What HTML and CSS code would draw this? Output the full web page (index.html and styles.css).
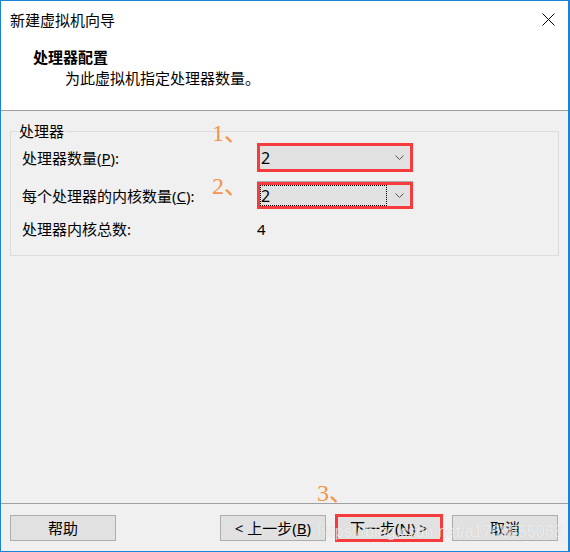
FILE: index.html
```html
<!DOCTYPE html>
<html lang="zh-CN">
<head>
<meta charset="utf-8">
<title>新建虚拟机向导</title>
<link rel="stylesheet" href="styles.css">
</head>
<body>
<div class="window">
  <div class="header">
    <div class="titlebar">
      <span class="title">新建虚拟机向导</span>
      <svg class="close" width="13" height="13" viewBox="0 0 13 13"><path d="M0.5 0.5 L12.5 12.5 M12.5 0.5 L0.5 12.5" stroke="#000" stroke-width="1" fill="none"/></svg>
    </div>
    <div class="heading">处理器配置</div>
    <div class="subtitle">为此虚拟机指定处理器数量。</div>
  </div>
  <div class="content">
    <fieldset class="group">
      <legend>处理器</legend>
      <div class="grid">
        <div class="label">处理器数量(<u>P</u>):</div>
        <div class="combo">
          <span class="val">2</span>
          <svg class="chev" width="9" height="5" viewBox="0 0 9 5"><path d="M0.5 0.5 L4.5 4.5 L8.5 0.5" stroke="#555" stroke-width="1" fill="none"/></svg>
        </div>
        <div class="label">每个处理器的内核数量(<u>C</u>):</div>
        <div class="combo combo-focus">
          <span class="val focus-rect">2</span>
          <svg class="chev" width="9" height="5" viewBox="0 0 9 5"><path d="M0.5 0.5 L4.5 4.5 L8.5 0.5" stroke="#555" stroke-width="1" fill="none"/></svg>
        </div>
        <div class="label">处理器内核总数:</div>
        <div class="value">4</div>
      </div>
    </fieldset>
  </div>
  <div class="footer">
    <button class="btn">帮助</button>
    <button class="btn back">&lt; 上一步(<u>B</u>)</button>
    <button class="btn next">下一步(<u>N</u>) &gt;</button>
    <button class="btn">取消</button>
  </div>
  <span class="note n1">1、</span>
  <span class="note n2">2、</span>
  <span class="note n3">3、</span>
  <span class="watermark">https://blog.csdn.net/a1766855068</span>
</div>
</body>
</html>
```
FILE: styles.css
```css
* { box-sizing: border-box; }
html, body { margin: 0; padding: 0; }
body { width: 570px; height: 552px; overflow: hidden; background: #fff; }

.window {
  position: relative;
  width: 570px;
  height: 552px;
  border: 1px solid #1883d7;
  border-right-width: 2px;
  display: flex;
  flex-direction: column;
  background: #f0f0f0;
  font-family: "Noto Sans", "Noto Sans CJK SC", sans-serif;
  font-size: 15px;
  line-height: 20px;
  color: #000;
}

.header {
  flex: none;
  height: 110px;
  background: #fff;
  border-bottom: 1px solid #a0a0a0;
}
.titlebar {
  height: 37px;
  display: flex;
  align-items: center;
  justify-content: space-between;
  padding: 0 13px 0 9px;
}
.close { display: block; }
.heading {
  margin-top: 9px;
  padding-left: 32px;
  font-weight: bold;
}
.subtitle {
  margin-top: 1px;
  padding-left: 64px;
}

.content { flex: 1; }

.group {
  margin: 10px 9px 0 9px;
  padding: 2px 0 16px 7px;
  border: 1px solid #dcdcdc;
  min-width: 0;
}
.group legend {
  padding: 0 1px;
  line-height: 20px;
}
.grid {
  display: grid;
  grid-template-columns: 235px 156px;
  grid-template-rows: 29px 27px 20px;
  row-gap: 10px;
  align-items: center;
  padding-left: 4px;
}
.label { white-space: nowrap; }

.combo {
  height: 29px;
  border: 3px solid #f53b3b;
  background: #e1e1e1;
  display: flex;
  align-items: center;
  justify-content: space-between;
  padding: 0 6px 0 1px;
}
.combo-focus {
  height: 27px;
  box-shadow: 0 -1px 0 #adadad;
  align-items: stretch;
}
.chev { display: block; align-self: center; }
.val { font-size: 16px; }
.focus-rect {
  width: 127px;
  margin-left: -1px;
  border: 1px dotted #000;
  display: flex;
  align-items: center;
}

.footer {
  flex: none;
  height: 48px;
  border-top: 1px solid #a0a0a0;
  display: flex;
  gap: 10px;
  padding: 11px 10px 0 9px;
}
.btn {
  width: 106px;
  height: 26px;
  border: 1px solid #adadad;
  background: #e1e1e1;
  font: inherit;
  color: #000;
  padding: 0;
  display: flex;
  align-items: center;
  justify-content: center;
}
.back { margin-left: auto; }
.next {
  outline: 3px solid #f53b3b;
  outline-offset: -2px;
}

.note {
  position: absolute;
  font-family: "Liberation Serif", "Noto Sans CJK SC", serif;
  font-size: 24px;
  line-height: 24px;
  color: #f39449;
  white-space: nowrap;
}
.n1 { left: 211px; top: 120px; }
.n2 { left: 211px; top: 173px; }
.n3 { left: 316px; top: 480px; }

.watermark {
  position: absolute;
  left: 316px;
  top: 523px;
  font-family: "Liberation Sans", sans-serif;
  font-size: 16px;
  line-height: 16px;
  color: rgba(255, 255, 255, 0.7);
  text-shadow: 0 0 1px rgba(0, 0, 0, 0.15);
  white-space: nowrap;
}
```
